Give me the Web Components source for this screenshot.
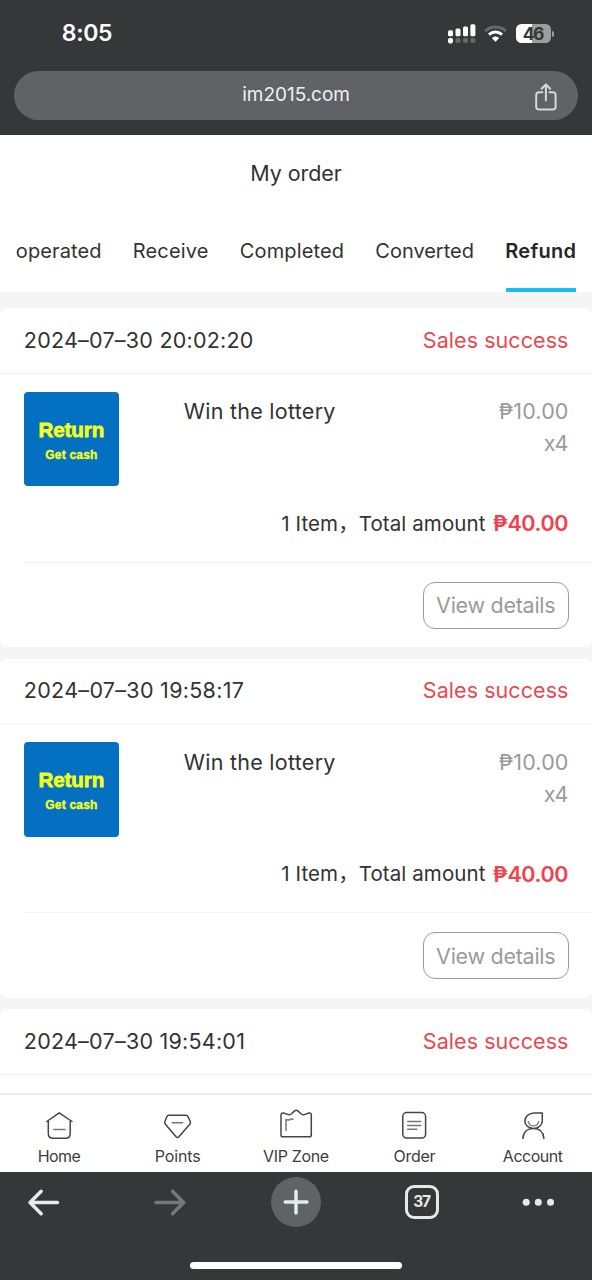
<!DOCTYPE html>
<html lang="en">
<head>
<meta charset="utf-8">
<title>My order</title>
<style>
html,body{margin:0;padding:0}
body{width:592px;height:1280px;overflow:hidden;background:#f5f5f5;font-family:Inter,"Noto Sans CJK SC",sans-serif;color:#323333}
</style>
</head>
<body>
<order-app></order-app>
<script>
const define = (name, render, after) => customElements.define(name, class extends HTMLElement {
  connectedCallback() {
    if (this.shadowRoot) return;
    this.attachShadow({ mode: 'open' }).innerHTML = render(this);
    if (after) after(this);
  }
});

/* A single line of text tracked to a given width. */
define('fit-text', el => `
  <style>
    :host{display:block;white-space:nowrap;line-height:1.2;flex:none;width:${el.getAttribute('w')}px;
      font-size:${el.getAttribute('size')}px;font-weight:${el.getAttribute('weight') || 400}}
    span{display:inline-block;white-space:pre}
  </style><span><slot></slot></span>`,
  el => {
    const s = el.shadowRoot.querySelector('span');
    const natural = s.getBoundingClientRect().width;
    const n = [...el.textContent].length;
    s.style.letterSpacing = ((+el.getAttribute('w') + 0.6 - natural) / (n - 1)) + 'px';
    s.style.marginLeft = '-0.2px';
  });

define('status-bar', () => `
  <style>
    :host{display:flex;height:71px;box-sizing:border-box;padding:4px 38px 7px 62px;justify-content:space-between;align-items:center;color:#fff}
    svg{display:block}
    .icons{display:flex;align-items:center;margin-top:-1px}
    .battery{width:38px;height:19px;display:flex;margin-left:9px}
    .level{width:35px;height:19px;flex:none;border-radius:5.5px;background:linear-gradient(90deg,#fff 47%,#9b9d9e 47%);color:#343839;display:flex;align-items:center;justify-content:center}
    .cap{width:2px;height:6px;margin:6.5px 0 0 1px;border-radius:0 2px 2px 0;background:#9b9d9e}
  </style>
  <fit-text w="50" size="23" weight="600">8:05</fit-text>
  <div class="icons">
    <svg width="28" height="20" viewBox="0 0 28 20">
      <g fill="#fff"><rect x="0" y="6.2" width="5" height="6" rx="1.5"/><rect x="7.5" y="4.6" width="5" height="7.6" rx="1.5"/><rect x="15" y="2.4" width="5" height="9.8" rx="1.5"/><rect x="22.4" y="0.2" width="5" height="12" rx="1.5"/><rect x="0" y="14" width="5" height="5.4" rx="1.8"/></g>
      <g fill="#66696a"><rect x="7.5" y="14" width="5" height="5" rx="1.8"/><rect x="15" y="14" width="5" height="5" rx="1.8"/><rect x="22.4" y="14" width="5" height="5" rx="1.8"/></g>
    </svg>
    <svg width="23" height="18" viewBox="0 0 23 18" fill="none" style="margin-left:8px">
      <path d="M1.2 6.1C7 .7 16 .7 21.8 6.1" stroke="#66696a" stroke-width="3"/>
      <path d="M5 9.6C8.8 6.1 14.2 6.1 18 9.6" stroke="#fff" stroke-width="3"/>
      <path d="M8.3 13.1Q11.5 10.6 14.7 13.1L11.5 16.4Z" fill="#fff" stroke="#fff" stroke-width=".8" stroke-linejoin="round"/>
    </svg>
    <div class="battery"><div class="level"><fit-text w="21" size="17.5" weight="700">46</fit-text></div><div class="cap"></div></div>
  </div>`);

define('address-bar', () => `
  <style>
    :host{display:grid;grid-template-columns:1fr auto 1fr;align-items:center;height:49px;margin:0 14px 14.5px;border-radius:25px;background:#5f6366;color:#eff1f2}
    fit-text{grid-column:2}
    svg{justify-self:end;margin:3px 20px 0 0}
  </style>
  <fit-text w="107" size="19">im2015.com</fit-text>
  <svg width="24" height="30" viewBox="0 0 24 30" fill="none" stroke="#d5d8da" stroke-width="2" stroke-linecap="round" stroke-linejoin="round">
    <path d="M8.4 10.2H5Q2.2 10.2 2.2 13V24.8Q2.2 27.6 5 27.6H18.8Q21.6 27.6 21.6 24.8V13Q21.6 10.2 18.8 10.2H15.4M11.9 18.4V2.7M7.6 6.8L11.9 2.5L16.2 6.8"/>
  </svg>`);

define('order-tab', el => `
  <style>
    :host{display:flex;height:80px;box-sizing:border-box;align-items:center}
    :host([active]){color:#262727;box-shadow:inset 0 -4px #16bdf6}
    fit-text{margin-top:-2px}
  </style>
  <fit-text w="${el.getAttribute('w')}" size="20" weight="${el.hasAttribute('active') ? 600 : 400}">${el.getAttribute('label')}</fit-text>`);

define('order-header', () => `
  <style>
    :host{display:block;background:#fff;height:157.5px}
    .title{height:77.5px;box-sizing:border-box;padding-top:2px;display:flex;justify-content:center;align-items:center}
    nav{display:flex;gap:32px;padding-left:16px}
  </style>
  <div class="title"><fit-text w="91" size="21.5">My order</fit-text></div>
  <nav>
    <order-tab label="operated" w="85"></order-tab>
    <order-tab label="Receive" w="75"></order-tab>
    <order-tab label="Completed" w="103.5"></order-tab>
    <order-tab label="Converted" w="98"></order-tab>
    <order-tab label="Refund" w="70" active></order-tab>
  </nav>`);

define('product-thumb', () => `
  <style>
    :host{display:flex;flex-direction:column;align-items:center;width:94.5px;height:94.5px;box-sizing:border-box;padding-top:26px;border-radius:4px;background:#0370c1;color:#f4ff1c;font-family:"Liberation Sans",Arial,sans-serif}
    .main{-webkit-text-stroke:.8px #f4ff1c}
    .sub{margin-top:5.5px;-webkit-text-stroke:.4px #f4ff1c}
  </style>
  <fit-text class="main" w="65" size="20.5" weight="700">Return</fit-text>
  <fit-text class="sub" w="51.5" size="12" weight="700">Get cash</fit-text>`);

/* With the "peek" attribute only the heading of the card is shown. */
define('order-card', el => `
  <style>
    :host{display:block;height:339px;margin-bottom:11.7px;background:#fff;border-radius:7px;overflow:hidden}
    header{display:flex;justify-content:space-between;align-items:center;height:66px;box-sizing:border-box;padding:.4px 24px 0;border-bottom:1px solid #f5f5f5}
    .status{color:#eb4850}
    .item{display:grid;grid-template-columns:160px 1fr auto;height:127px;box-sizing:border-box;padding:17.5px 24px 0}
    .name{margin-top:7.8px}
    .price{display:flex;flex-direction:column;align-items:flex-end;color:#9a9a9b;margin-top:7.8px;gap:6px}
    .total{display:flex;justify-content:flex-end;align-items:center;gap:8px;height:61.5px;box-sizing:border-box;padding:0 24px 14.4px 0;margin-left:24px;border-bottom:1px solid #f5f5f5}
    .total fit-text + fit-text{color:#ef424c}
    footer{display:flex;justify-content:flex-end;padding:19.2px 23.5px 0}
    button{all:unset;box-sizing:border-box;display:flex;align-items:center;justify-content:center;width:145.5px;height:47px;padding-top:2px;border:1.4px solid #9a9a9a;border-radius:12px;color:#9a9a9b}
  </style>
  <header><fit-text w="${el.getAttribute('w')}" size="21.5">${el.getAttribute('date')}</fit-text><fit-text class="status" w="145" size="21.5">Sales success</fit-text></header>
  ${el.hasAttribute('peek') ? '' : `<div class="item">
    <product-thumb></product-thumb>
    <fit-text class="name" w="151" size="21.5">Win the lottery</fit-text>
    <div class="price"><fit-text w="69" size="21.5">₱10.00</fit-text><fit-text w="24" size="21.5">x4</fit-text></div>
  </div>
  <div class="total"><fit-text w="203.5" size="20.5">1 Item，Total amount</fit-text><fit-text w="75" size="21.5" weight="600">₱40.00</fit-text></div>
  <footer><button><fit-text w="119" size="21.5">View details</fit-text></button></footer>`}`);

const icons = {
  home: '<path d="M5.3 11.5V23.5Q5.3 28.3 10 28.3H22.5Q27.2 28.3 27.2 23.5V11.5M3.8 11.5L16.2 2.8L29 11.5"/><path d="M10.8 19.6H22" stroke="#777"/>',
  points: '<path d="M7.9 5.2H24.8Q26.3 5.2 27.1 6.9L29.3 11.5Q29.8 13 28.8 14.3L18.1 26.6Q16.5 28.6 14.9 26.6L4.4 14.3Q3.3 13 3.9 11.5L5.7 6.9Q6.4 5.2 7.9 5.2Z" transform="translate(-1)"/><path d="M10.3 12.8H20.7" stroke="#777"/>',
  vip: '<path d="M2.8 26.8Q1 26.8 1 25V5Q1 2.6 3.5 3L8.3 4.6Q10 5 11.2 4L14.6 .9Q16.2 -.4 17.8 .9L21.4 4Q22.8 5 24.3 4.6L29 3Q31.3 2.6 31.3 5V25Q31.3 26.8 29.3 26.8Z"/><path d="M6 20.6V9.5Q8 10.5 10 9.5T13 9.2" stroke="#777"/>',
  order: '<rect x="4.8" y="2.6" width="22.8" height="25.4" rx="3.8"/><path d="M9.7 11.6H22.7M9.7 15.6H22.7M9.7 19.2H18.8" stroke="#777"/>',
  account: '<path d="M25.3 3H17.3C11.7 3 7.9 6.6 7.9 11.2C7.9 15.5 11.9 18.4 16.4 18.4S25.3 15.4 25.3 11ZM5.9 28.4C6.2 21.9 10.4 18.4 16.4 18.4S26.5 21.9 26.9 28.4"/><path d="M11.4 11.5C12.1 17.2 20.8 17.2 21.5 11.5" stroke="#888"/>'
};
define('nav-item', el => `
  <style>
    :host{display:flex;flex-direction:column;align-items:center;padding-top:15px;color:#3d3d3e}
    svg{display:block;overflow:visible}
    fit-text{margin-top:6.5px}
  </style>
  <svg width="32" height="30" viewBox="0 0 32 30" fill="none" stroke="#454546" stroke-width="1.5" stroke-linecap="round" stroke-linejoin="round">${icons[el.getAttribute('icon')]}</svg>
  <fit-text w="${el.getAttribute('w')}" size="16">${el.getAttribute('label')}</fit-text>`);

define('site-nav', () => `
  <style>:host{display:grid;grid-template-columns:repeat(5,1fr);height:78.5px;box-sizing:border-box;background:#fff;border-top:2px solid #ebebeb}</style>
  <nav-item icon="home" label="Home" w="42.5"></nav-item>
  <nav-item icon="points" label="Points" w="45.5"></nav-item>
  <nav-item icon="vip" label="VIP Zone" w="65.5"></nav-item>
  <nav-item icon="order" label="Order" w="41.5"></nav-item>
  <nav-item icon="account" label="Account" w="59.5"></nav-item>`);

define('browser-toolbar', () => `
  <style>
    :host{display:flex;flex-direction:column;height:108.5px;background:#343839}
    .row{display:grid;grid-template-columns:126px 126px 126px 115.5px 50px;padding:5.5px 0 0 19px}
    .row>*{width:50px;height:50px;display:flex;align-items:center;justify-content:center}
    .plus{border-radius:50%;background:#5f6366}
    .tabs{box-sizing:border-box;width:34px;height:34px;padding-top:1px;border:3px solid #e5e9eb;border-radius:9px;display:flex;align-items:center;justify-content:center;color:#e5e9eb}
    .bar{width:211.5px;height:7px;border-radius:4px;background:#fff;margin:34.8px auto 0;}
    svg{fill:none;stroke:#e5eaec;stroke-width:3.5;stroke-linecap:round;stroke-linejoin:round}
  </style>
  <div class="row">
    <svg viewBox="0 0 50 50"><path d="M38.5 25.5H11M22.2 14.3L11 25.5L22.2 36.7"/></svg>
    <svg viewBox="0 0 50 50" style="stroke:#74787a"><path d="M11 25.5H38.5M27.5 14.3L38.7 25.5L27.5 36.7"/></svg>
    <div class="plus"><svg width="50" height="50" viewBox="0 0 50 50"><path d="M14.2 25H36M25 14.2V36"/></svg></div>
    <div><div class="tabs"><fit-text w="17" size="15.5" weight="700">37</fit-text></div></div>
    <svg viewBox="0 0 50 50" style="fill:#e5e9eb;stroke:none"><circle cx="13.2" cy="25.3" r="3.5"/><circle cx="25.3" cy="25.3" r="3.5"/><circle cx="37.5" cy="25.3" r="3.5"/></svg>
  </div>
  <div class="bar"></div>`);

define('order-app', () => `
  <style>
    :host{display:flex;flex-direction:column;height:1280px}
    .chrome{background:#343839;flex:none}
    order-header,site-nav,browser-toolbar{flex:none}
    main{flex:1;min-height:0;overflow:hidden;padding-top:16px;background:#f5f5f5}
  </style>
  <div class="chrome"><status-bar></status-bar><address-bar></address-bar></div>
  <order-header></order-header>
  <main>
    <order-card date="2024–07–30 20:02:20" w="229"></order-card>
    <order-card date="2024–07–30 19:58:17" w="219.5"></order-card>
    <order-card date="2024–07–30 19:54:01" w="220.5" peek></order-card>
  </main>
  <site-nav></site-nav>
  <browser-toolbar></browser-toolbar>`);
</script>
</body>
</html>
